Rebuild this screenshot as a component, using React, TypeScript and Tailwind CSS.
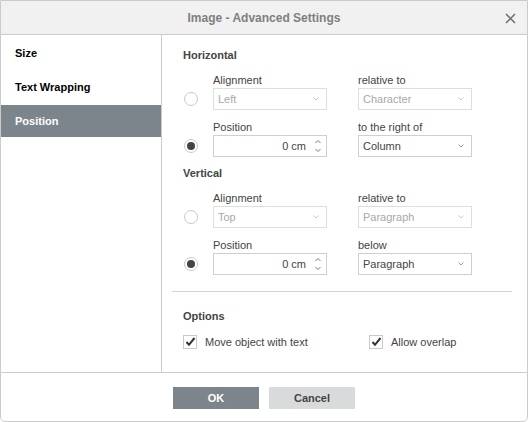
import { ReactNode } from "react";

function Radio({ checked }: { checked?: boolean }) {
  return (
    <div className="w-[30px] flex justify-start pl-[1px]">
      <span className="w-[14px] h-[14px] rounded-full border border-[#c9c9c9] bg-white flex items-center justify-center">
        {checked && <span className="w-[8px] h-[8px] rounded-full bg-[#444]" />}
      </span>
    </div>
  );
}

function Chevron({ light }: { light?: boolean }) {
  return (
    <svg width="6" height="4" viewBox="0 0 6 4" className="shrink-0">
      <path d="M0.5 0.5 L3 3 L5.5 0.5" fill="none" stroke={light ? "#c8c8c8" : "#a0a0a0"} strokeWidth="1" />
    </svg>
  );
}

function Select({ value, disabled }: { value: string; disabled?: boolean }) {
  return (
    <div
      className={`w-[114px] h-[22px] border flex items-center justify-between pl-[4px] pr-[7px] ${
        disabled ? "border-[#dedede] text-[#a8a8a8]" : "border-[#cfcfcf] text-[#444]"
      }`}
    >
      <span>{value}</span>
      <Chevron light={disabled} />
    </div>
  );
}

function Spin({ value }: { value: string }) {
  return (
    <div className="w-[114px] h-[22px] border border-[#cfcfcf] flex items-center justify-end pr-[5px] text-[#444]">
      <span className="mr-[9px]">{value}</span>
      <svg width="6" height="14" viewBox="0 0 6 14">
        <path d="M0.5 4 L3 1.5 L5.5 4" fill="none" stroke="#777" strokeWidth="1" />
        <path d="M0.5 10 L3 12.5 L5.5 10" fill="none" stroke="#777" strokeWidth="1" />
      </svg>
    </div>
  );
}

function Field({ label, children }: { label: string; children: ReactNode }) {
  return (
    <div className="flex flex-col">
      <div className="h-[14px] leading-[14px] mb-[1px] text-[#444]">{label}</div>
      {children}
    </div>
  );
}

function Row({
  checked,
  label1,
  control1,
  label2,
  control2,
}: {
  checked?: boolean;
  label1: string;
  control1: ReactNode;
  label2: string;
  control2: ReactNode;
}) {
  return (
    <div className="flex items-end">
      <div className="h-[22px] flex items-center">
        <Radio checked={checked} />
      </div>
      <div className="flex gap-[31px]">
        <Field label={label1}>{control1}</Field>
        <Field label={label2}>{control2}</Field>
      </div>
    </div>
  );
}

function Check({ label }: { label: string }) {
  return (
    <div className="flex items-center gap-[8px]">
      <span className="w-[14px] h-[14px] border border-[#c9c9c9] bg-white flex items-center justify-center">
        <svg width="11" height="10" viewBox="0 0 11 10">
          <path d="M1.5 5 L4 7.8 L9.5 1" fill="none" stroke="#333" strokeWidth="2" />
        </svg>
      </span>
      <span className="text-[#444]">{label}</span>
    </div>
  );
}

export default function App() {
  const tabs = ["Size", "Text Wrapping", "Position"];
  return (
    <div className="w-[528px] h-[422px] bg-white border border-[#cbcbcb] rounded-b-[5px] flex flex-col overflow-hidden text-[11px] font-['Liberation_Sans',Arial,sans-serif]">
      <header className="h-[34px] shrink-0 bg-[#f1f1f1] border-b border-[#cbcbcb] flex items-center justify-center relative">
        <span className="font-bold text-[12px] text-[#7f7f7f]">Image - Advanced Settings</span>
        <svg width="11" height="11" viewBox="0 0 11 11" className="absolute right-[11px] top-[12px]">
          <path d="M1 1 L10 10 M10 1 L1 10" stroke="#6b6b6b" strokeWidth="1.5" />
        </svg>
      </header>

      <div className="flex flex-1 min-h-0">
        <nav className="w-[161px] shrink-0 border-r border-[#cbcbcb] pt-[2px] flex flex-col gap-[2px]">
          {tabs.map((t) => (
            <div
              key={t}
              className={`h-[32px] flex items-center pl-[14px] font-bold ${
                t === "Position" ? "bg-[#7d858c] text-white" : "text-black"
              }`}
            >
              {t}
            </div>
          ))}
        </nav>

        <main className="flex-1 flex flex-col">
          <div className="pl-[21px] pt-[13px]">
            <div className="h-[14px] leading-[14px] font-bold text-[#444]">Horizontal</div>
            <div className="mt-[11px] flex flex-col gap-[10px]">
              <Row
                label1="Alignment"
                control1={<Select value="Left" disabled />}
                label2="relative to"
                control2={<Select value="Character" disabled />}
              />
              <Row
                checked
                label1="Position"
                control1={<Spin value="0 cm" />}
                label2="to the right of"
                control2={<Select value="Column" />}
              />
            </div>
            <div className="mt-[9px] h-[14px] leading-[14px] font-bold text-[#444]">Vertical</div>
            <div className="mt-[11px] flex flex-col gap-[10px]">
              <Row
                label1="Alignment"
                control1={<Select value="Top" disabled />}
                label2="relative to"
                control2={<Select value="Paragraph" disabled />}
              />
              <Row
                checked
                label1="Position"
                control1={<Spin value="0 cm" />}
                label2="below"
                control2={<Select value="Paragraph" />}
              />
            </div>
          </div>

          <div className="mt-[16px] ml-[10px] mr-[15px] border-t border-[#d5d5d5]" />

          <div className="pl-[21px] pt-[17px]">
            <div className="h-[14px] leading-[14px] font-bold text-[#444]">Options</div>
            <div className="mt-[11px] flex">
              <div className="w-[186px]">
                <Check label="Move object with text" />
              </div>
              <Check label="Allow overlap" />
            </div>
          </div>
        </main>
      </div>

      <footer className="h-[49px] shrink-0 border-t border-[#cbcbcb] flex justify-center gap-[10px] pt-[14px]">
        <button className="w-[86px] h-[22px] bg-[#7d858c] text-white font-bold">OK</button>
        <button className="w-[86px] h-[22px] bg-[#d8dadc] text-[#444] font-bold">Cancel</button>
      </footer>
    </div>
  );
}
